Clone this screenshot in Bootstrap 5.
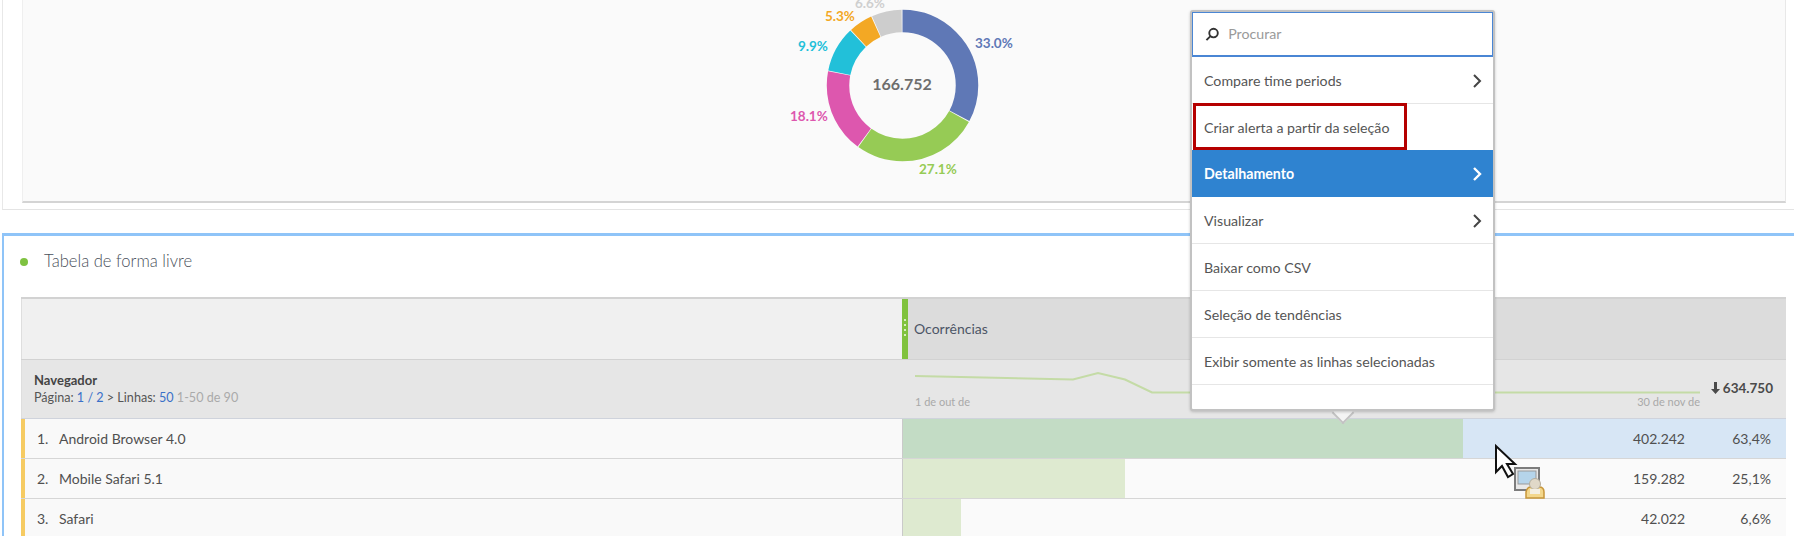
<!DOCTYPE html>
<html lang="pt-BR">
<head>
    <meta charset="UTF-8">
    <meta name="viewport" content="width=device-width, initial-scale=1.0">
    <title>Tabela de forma livre</title>
    <link href="https://cdn.jsdelivr.net/npm/bootstrap@5.3.0/dist/css/bootstrap.min.css" rel="stylesheet">
    <style>
        html, body { height: 536px; overflow: hidden; }
        body { background: #fff; font-family: Lato, "Open Sans", sans-serif; font-size: 14px; color: #505050; position: relative; padding-left: 2px; }

        /* top panel with donut */
        .chart-panel { height: 210px; padding: 0 8px 7px 19px; border-left: 1px solid #e8e8e8; border-bottom: 1px solid #e4e4e4; }
        .chart-inner { height: 203px; background: #fafafa; border-left: 1px solid #efefef; border-right: 1px solid #e8e8e8; border-bottom: 2px solid #d4d4d4; }
        .donut-svg { display: block; width: 400px; height: 201px; margin-left: 657px; }
        .donut-svg text { font-family: Lato, sans-serif; font-size: 13.5px; font-weight: 700; }
        .donut-svg .donut-total { font-size: 16px; fill: #6e6e6e; text-anchor: middle; }

        /* free form table */
        .table-panel { margin-top: 23px; height: 303px; padding: 0 8px 0 17px; border-top: 3px solid #8fc4f8; border-left: 2px solid #8fc4f8; }
        .panel-head { height: 61px; padding-bottom: 10px; margin-left: -1px; }
        .panel-dot { width: 8px; height: 8px; border-radius: 50%; background: #7fc241; margin-right: 16px; }
        .panel-title { font-size: 16.6px; font-weight: 300; color: #4a515b; }

        .left-col { width: 881px; flex: none; }
        .right-col { flex: 1 1 auto; min-width: 0; }
        .head-row { height: 62px; border-top: 2px solid #d2d2d2; }
        .head-row .left-col { background: #f0f0f0; border-left: 1px solid #dedede; }
        .head-row .right-col { background: #dcdcdc; }
        .col-handle { width: 6px; height: 60px; background: #80c23e; padding-top: 20px; }
        .col-handle i { display: block; width: 2px; height: 2px; margin: 0 auto 3px; background: #d8eec0; }
        .col-name { padding: 19px 0 0 6px; color: #4c5566; }

        .sum-row { height: 60px; background: #e6e6e6; border-top: 1px solid #d2d2d2; border-bottom: 1px solid #cfd3dc; }
        .sum-row .left-col { padding: 12px 0 0 12px; border-left: 1px solid #dedede; }
        .dim-name { font-size: 13px; font-weight: 700; color: #444; line-height: 17px; }
        .pager { font-size: 12.6px; line-height: 18px; color: #555; }
        .pager b { font-weight: 400; color: #3a70c8; }
        .pager span { color: #aaa; }
        .spark-wrap { width: 785px; margin-left: 13px; }
        .spark-svg { display: block; width: 785px; height: 26px; margin-top: 10px; }
        .spark-labels { font-size: 11px; color: #a9a9a9; line-height: 14px; margin-top: -1px; }
        .sum-total { font-weight: 700; font-size: 13.5px; color: #4a4a4a; padding: 18px 13px 0 0; }
        .sum-total svg { margin-right: 3px; vertical-align: -1px; }

        .data-row { height: 40px; border-bottom: 1px solid #d6d6d6; }
        .data-row .left-col { background: #f9f9f9; border-left: 4px solid #f6cb62; display: flex; align-items: center; padding-left: 12px; }
        .row-num { width: 22px; }
        .value-cell { position: relative; background: #fafafa; border-left: 1px solid #cacaca; height: 100%; }
        .value-cell.is-selected { background: #d7e6f5; }
        .value-bar { position: absolute; left: 0; top: 0; bottom: 0; background: #deead0; }
        .is-selected .value-bar { background: #c3dcc5; }
        .value-num { position: relative; width: 782px; text-align: right; }
        .value-pct { position: relative; width: 86px; text-align: right; }

        /* context menu */
        .ctx-menu { position: absolute; left: 1190px; top: 10px; width: 305px; height: 401px; background: #fff; border: 2px solid #c2c2c2; border-radius: 3px; box-shadow: 0 1px 3px rgba(0,0,0,.2); z-index: 5; }
        .ctx-search { height: 45px; margin: 0; border: 1px solid #4a86d4; border-bottom-width: 2px; padding-left: 12px; }
        .ctx-search input { border: 0; padding: 0 0 0 9px; box-shadow: none !important; font-size: 14.2px; background: transparent; }
        .ctx-search input::placeholder { color: #9a9a9a; }
        .ctx-menu .list-group-item { height: 47px; padding: 1px 11px 0 12px; border-color: #e6e6e6; color: #555; font-size: 14.2px; display: flex; align-items: center; justify-content: space-between; position: relative; }
        .ctx-menu .list-group-item.active { background: #2f83d0; border-color: #2f83d0; color: #fff; font-weight: 700; }
        .ctx-menu .list-group-item.ctx-blank { height: 23px; border-bottom: 0; }
        .ctx-chevron { width: 10px; height: 16px; fill: none; stroke: #444; stroke-width: 2; margin-left: auto; }
        .active .ctx-chevron { stroke: #fff; stroke-width: 2.4; }
        .red-mark { position: absolute; left: 1px; top: -1px; width: 214px; height: 47px; border: 3px solid #b50000; pointer-events: none; }
        .ctx-arrow { position: absolute; left: 1342px; top: 405px; width: 16px; height: 16px; background: #f4f4f4; border-right: 2px solid #c2c2c2; border-bottom: 2px solid #c2c2c2; transform: rotate(45deg); z-index: 4; margin-left: -7px; }

        .drag-cursor { position: absolute; left: 1490px; top: 440px; width: 62px; height: 62px; z-index: 6; }
    </style>
</head>
<body>
    <!-- Donut panel -->
    <div class="chart-panel">
        <div class="chart-inner">
            <svg class="donut-svg" viewBox="680 0 400 201">
                <g fill="none" stroke-width="22.5" transform="rotate(-90 902.5 85.5)">
                    <circle cx="902.5" cy="85.5" r="64.5" pathLength="100" stroke="#5f78b6" stroke-dasharray="32.8 67.2" stroke-dashoffset="0"/>
                    <circle cx="902.5" cy="85.5" r="64.5" pathLength="100" stroke="#96cb55" stroke-dasharray="26.9 73.1" stroke-dashoffset="-33"/>
                    <circle cx="902.5" cy="85.5" r="64.5" pathLength="100" stroke="#dd57ae" stroke-dasharray="17.9 82.1" stroke-dashoffset="-60.1"/>
                    <circle cx="902.5" cy="85.5" r="64.5" pathLength="100" stroke="#22c0d9" stroke-dasharray="9.7 90.3" stroke-dashoffset="-78.2"/>
                    <circle cx="902.5" cy="85.5" r="64.5" pathLength="100" stroke="#f3a824" stroke-dasharray="5.1 94.9" stroke-dashoffset="-88.1"/>
                    <circle cx="902.5" cy="85.5" r="64.5" pathLength="100" stroke="#cdcdcd" stroke-dasharray="6.4 93.6" stroke-dashoffset="-93.4"/>
                </g>
                <text class="donut-total" x="902" y="90">166.752</text>
                <text x="975" y="48" fill="#5f78b6">33.0%</text>
                <text x="919" y="174" fill="#96cb55">27.1%</text>
                <text x="790" y="121" fill="#dd57ae">18.1%</text>
                <text x="798" y="51" fill="#22c0d9">9.9%</text>
                <text x="825" y="21" fill="#f3a824">5.3%</text>
                <text x="855" y="8" fill="#cfcfcf">6.6%</text>
            </svg>
        </div>
    </div>

    <!-- Freeform table panel -->
    <div class="table-panel">
        <div class="panel-head d-flex align-items-center">
            <span class="panel-dot"></span>
            <span class="panel-title">Tabela de forma livre</span>
        </div>

        <div class="head-row d-flex">
            <div class="left-col"></div>
            <div class="right-col d-flex">
                <div class="col-handle"><i></i><i></i><i></i><i></i></div>
                <div class="col-name">Ocorrências</div>
            </div>
        </div>

        <div class="sum-row d-flex">
            <div class="left-col">
                <div class="dim-name">Navegador</div>
                <div class="pager">Página: <b>1 / 2</b> &gt; Linhas: <b>50</b> <span>1-50 de 90</span></div>
            </div>
            <div class="right-col d-flex justify-content-between">
                <div class="spark-wrap">
                    <svg class="spark-svg" viewBox="0 0 785 26">
                        <polyline fill="none" stroke="#c4dba6" stroke-width="2" points="0,6 158,9.500 183,3 210,9.500 237,22.500 785,22.500"/>
                    </svg>
                    <div class="spark-labels d-flex justify-content-between"><span>1 de out de</span><span>30 de nov de</span></div>
                </div>
                <div class="sum-total"><svg width="9" height="12" viewBox="0 0 9 12" fill="#4a4a4a"><path d="M3 0h3v7h3l-4.500 5L0 7h3z"/></svg>634.750</div>
            </div>
        </div>

        <div class="data-row d-flex">
            <div class="left-col"><span class="row-num">1.</span>Android Browser 4.0</div>
            <div class="right-col value-cell is-selected d-flex align-items-center">
                <div class="value-bar" style="width: 63.4%"></div>
                <div class="value-num">402.242</div>
                <div class="value-pct">63,4%</div>
            </div>
        </div>
        <div class="data-row d-flex">
            <div class="left-col"><span class="row-num">2.</span>Mobile Safari 5.1</div>
            <div class="right-col value-cell d-flex align-items-center">
                <div class="value-bar" style="width: 25.1%"></div>
                <div class="value-num">159.282</div>
                <div class="value-pct">25,1%</div>
            </div>
        </div>
        <div class="data-row d-flex">
            <div class="left-col"><span class="row-num">3.</span>Safari</div>
            <div class="right-col value-cell d-flex align-items-center">
                <div class="value-bar" style="width: 6.6%"></div>
                <div class="value-num">42.022</div>
                <div class="value-pct">6,6%</div>
            </div>
        </div>
    </div>

    <!-- Context menu -->
    <div class="ctx-menu">
        <div class="ctx-search d-flex align-items-center">
            <svg width="15" height="15" viewBox="0 0 15 15" fill="none" stroke="#333" stroke-width="2"><circle cx="9" cy="6" r="4.500"/><path d="M5.500 9.500 1.500 13.500"/></svg>
            <input class="form-control" type="text" placeholder="Procurar">
        </div>
        <div class="list-group list-group-flush">
            <div class="list-group-item">Compare time periods <svg class="ctx-chevron" viewBox="0 0 10 16"><path d="M2 2l6 6-6 6"/></svg></div>
            <div class="list-group-item">Criar alerta a partir da seleção<div class="red-mark"></div></div>
            <div class="list-group-item active">Detalhamento <svg class="ctx-chevron" viewBox="0 0 10 16"><path d="M2 2l6 6-6 6"/></svg></div>
            <div class="list-group-item">Visualizar <svg class="ctx-chevron" viewBox="0 0 10 16"><path d="M2 2l6 6-6 6"/></svg></div>
            <div class="list-group-item">Baixar como CSV</div>
            <div class="list-group-item">Seleção de tendências</div>
            <div class="list-group-item">Exibir somente as linhas selecionadas</div>
            <div class="list-group-item ctx-blank"></div>
        </div>
    </div>
    <div class="ctx-arrow"></div>

    <!-- Cursor with drag badge -->
    <svg class="drag-cursor" viewBox="0 0 62 62">
        <rect x="25" y="28" width="24" height="22" fill="#e8e8e8" stroke="#7c7c7c" stroke-width="2"/>
        <rect x="28" y="31" width="18" height="13" fill="#b5d4ea" stroke="#999"/>
        <path d="M36 58v-6q1-5 5-5h8q5 0 5 5v6z" fill="#f3d78c" stroke="#c8963a" stroke-width="1.500"/>
        <circle cx="45" cy="44" r="5.500" fill="#e0d8c8" stroke="#b5ad9c"/>
        <rect x="40" y="49" width="10" height="5" fill="#f4efe2"/>
        <path d="M6 6v26l6-6 6 11 5-3-6-10h8z" fill="#fff" stroke="#111" stroke-width="2"/>
    </svg>

    <script src="https://cdn.jsdelivr.net/npm/bootstrap@5.3.0/dist/js/bootstrap.bundle.min.js"></script>
</body>
</html>
